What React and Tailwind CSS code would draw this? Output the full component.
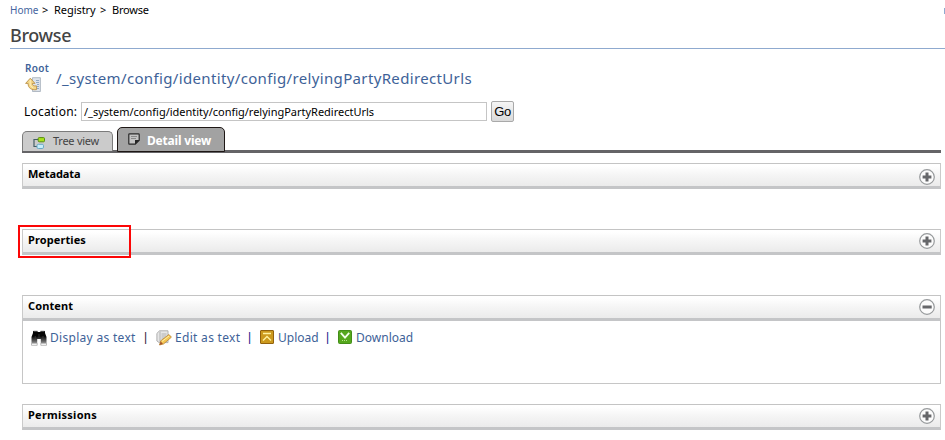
import React from "react";

function Toggle({ open }) {
  return (
    <svg className="h-4 w-4" viewBox="0 0 16 16" fill="none">
      <circle cx="8" cy="8" r="7.3" fill="#fcfcfc" stroke="#979a9c" strokeWidth="1.2" />
      <path d={open ? "M3.5 8h9.2" : "M3.6 8h8.8M8 3.6v8.8"} stroke="#66676a" strokeWidth="3" />
    </svg>
  );
}

function Header({ title, spacing, open, iconOffset = "pt-[3px]" }) {
  return (
    <div className="flex h-[26px] w-[919px] justify-between border-x border-t border-b-[3px] border-x-[#cacaca] border-t-[#c4c4c4] border-b-[#c4c5c7] bg-linear-to-b from-white from-10% via-[#f5f5f5] via-50% to-[#ebebeb] pl-[5px] pr-[5px]">
      <h2 className={"text-[11px] font-bold leading-[20px] text-black " + spacing}>{title}</h2>
      <div className={iconOffset}><Toggle open={open} /></div>
    </div>
  );
}

function ParentIcon() {
  return (
    <svg className="mt-px h-4 w-4" viewBox="0 0 16 16">
      <path d="M7.5.7h7.9v13.8H7.5z" fill="#dce3ec" stroke="#a2acb8" strokeWidth=".8" />
      <path d="M11 3.5h3M11 5.5h3M12 7.5h2M12 9.5h2M11 11.5h3" stroke="#8fa8c4" />
      <path d="M.6 6.4 5.3 1.2 10 6.4H7.4c0 2 1 2.7 4.2 2.5v3.7C6.6 13.4 2.9 11 3.1 6.4z" fill="#f4d687" stroke="#bb924a" strokeWidth=".9" />
      <path d="M5.2 3v4.2q.3 2.6 3 3.6" fill="none" stroke="#fff0bd" />
    </svg>
  );
}

function TreeIcon() {
  return (
    <svg className="h-3 w-3 shrink-0" viewBox="0 0 12 12" fill="none">
      <path d="M5 2.5H1v7h3" stroke="#455f65" strokeWidth="1.2" />
      <rect x="5.2" y=".6" width="6.3" height="4.2" rx="1" fill="#a8e21c" stroke="#568c11" />
      <rect x="4" y="7.3" width="6.5" height="4.2" rx="1.3" fill="#c7eefb" stroke="#69a9c4" />
    </svg>
  );
}

function NoteIcon() {
  return (
    <svg className="h-3 w-3 shrink-0" viewBox="0 0 12 12">
      <path d="M1.5.8h9q.7 0 .7.7v5.7l-4 4H1.5q-.7 0-.7-.7v-9q0-.7.7-.7z" fill="#c3c3c3" stroke="#292929" strokeWidth="1.2" />
      <path d="M7 11.5V7h4.5z" fill="#252525" />
      <path d="M3 3.5h6M3 5.5h5" stroke="#8a8a8a" />
    </svg>
  );
}

function BinocularsIcon() {
  return (
    <svg className="mt-px h-4 w-4 shrink-0" viewBox="0 0 16 16">
      <defs>
        <linearGradient id="barrel" x2="0" y2="1">
          <stop offset=".4" stopColor="#050505" />
          <stop offset="1" stopColor="#999" />
        </linearGradient>
      </defs>
      <path d="M2 1h4.5v1h3V1H14v2l1.5 4v7H9.8V9H6.2v5H.5V7L2 3z" fill="url(#barrel)" />
      <path d="M2.5 1.2h4M9.5 1.2h4" stroke="#777" strokeWidth=".8" />
      <path d="M8 4v4M4.2 6v3M12 6v3" stroke="#444" strokeWidth=".7" />
      <path d="M.5 13.3h5.7v2H.5zM9.8 13.3h5.7v2H9.8z" fill="#fff" stroke="#aaa" strokeWidth=".8" />
    </svg>
  );
}

function EditIcon() {
  return (
    <svg className="mt-px h-4 w-4 shrink-0" viewBox="0 0 16 16">
      <path d="M3.5.8H12v11.8H3.2L.9 11V3.4z" fill="#e7e7e7" stroke="#a9a9a9" strokeWidth=".9" />
      <path d="M4 1.5v10.3M5.5 4h5M5.5 6h5M5.5 8h3" stroke="#aaa" strokeWidth=".9" />
      <path d="m3.5 15 1.3-4.3L13 4.5l2.4 2.7L7.5 14z" fill="#f4c654" stroke="#b98434" strokeWidth=".8" />
      <path d="m3.5 15 1.2-3.4 2.2 2.2z" fill="#a6552d" />
      <path d="m6 11.4 7-5.4" stroke="#fff1a8" />
    </svg>
  );
}

function UploadIcon() {
  return (
    <svg className="mt-px h-[14px] w-[14px] shrink-0" viewBox="0 0 14 14" fill="none">
      <rect x=".5" y=".5" width="13" height="13" rx=".5" fill="#cc991d" stroke="#93620d" />
      <path d="M3 3.5h8M3 10.5l4-4 4 4" stroke="#fff2a0" strokeWidth="1.4" />
    </svg>
  );
}

function DownloadIcon() {
  return (
    <svg className="mt-px h-[14px] w-[14px] shrink-0" viewBox="0 0 14 14" fill="none">
      <rect x=".5" y=".5" width="13" height="13" rx="1" fill="#55a81c" stroke="#438d18" />
      <path d="M2.8 2.8 7 7.6l4.2-4.8" stroke="#f3ffe9" strokeWidth="1.8" />
      <path d="M4 10.5h6" stroke="#b5e38c" strokeDasharray="1 1" />
    </svg>
  );
}

function Separator({ color = "text-[#11118b]" }) {
  return <span className={"w-3 shrink-0 font-['Liberation_Sans',sans-serif] text-[12px] " + color}>|</span>;
}

export default function App() {
  return (
    <div className="relative h-[440px] w-[945px] overflow-hidden bg-white font-['Noto_Sans',sans-serif] text-black">
      <nav className="flex h-5 items-center pl-[10px] text-[11px] leading-5">
        <span className="w-[32px] text-[10px] text-[#4665a0]">Home</span>
        <span className="w-3">&gt;</span>
        <span className="w-[46px] tracking-[-0.05px]">Registry</span>
        <span className="w-[12px]">&gt;</span>
        <span className="tracking-[-0.2px]">Browse</span>
      </nav>
      <h1 className="ml-[10px] h-[29px] border-b border-[#8faacf] text-[18px] font-medium leading-[30px] tracking-[-0.35px] text-[#444]">Browse</h1>
      <div className="flex h-[53px] pl-[25px] pt-[12px] text-[#3e6298]">
        <div className="w-[31px] shrink-0">
          <div className="h-[15px] text-[10px] font-semibold leading-[14px] tracking-[0.3px]">Root</div>
          <ParentIcon />
        </div>
        <div className="text-[15px] leading-[35px] tracking-[0.35px]">/_system/config/identity/config/relyingPartyRedirectUrls</div>
      </div>
      <div className="flex h-[20px] pl-[24px]">
        <label className="w-[57px] text-[12px] leading-[19px] tracking-[0.2px]">Location:</label>
        <input className="h-[19px] w-[406px] border border-[#c5c5c5] bg-white px-[2px] text-[11px] tracking-[-0.01px] outline-none" defaultValue="/_system/config/identity/config/relyingPartyRedirectUrls" />
        <button className="-mt-px ml-1 h-[21px] w-[23px] rounded-[2px] border border-[#a9a9a9] bg-linear-to-b from-[#f5f5f5] to-[#dadada] text-[13px] leading-[19px] tracking-[-0.4px] font-['Liberation_Sans',sans-serif]">Go</button>
      </div>
      <div className="flex h-[31px] pl-[22px]">
        <div className="mt-[9px] flex h-5 w-[91px] rounded-t-[5px] border border-b-0 border-[#7b7b7b] bg-[#cbcbcb] pl-[10px] pt-[5px] text-[11px] text-[#444]">
          <TreeIcon />
          <span className="-mt-[6px] ml-[8px] leading-[19px] tracking-[-0.25px]">Tree view</span>
        </div>
        <div className="relative z-10 ml-1 mt-[5px] flex h-[25px] w-[108px] rounded-t-[5px] border border-[#1e1715] bg-[#a2a2a2] pl-[10px] pt-[5px] text-[12px] font-bold text-white">
          <NoteIcon />
          <span className="-mt-[4px] ml-[7px] leading-[24px] tracking-[-0.2px]">Detail view</span>
        </div>
      </div>
      <div className="-mt-[3px] ml-[22px] mr-1 h-[3px] bg-[#656467]" />
      <main className="ml-[22px] pt-[10px]">
        <Header title="Metadata" spacing="tracking-[-0.1px]" iconOffset="pt-[5px]" />
        <div className="mt-10"><Header title="Properties" spacing="tracking-[0.1px]" /></div>
        <section className="mt-10">
          <Header title="Content" spacing="tracking-[0.1px]" open />
          <div className="flex h-[63px] w-[919px] border-x border-b border-[#c6c6c6] pl-2 pt-[8px] text-[12px] leading-[17px] text-[#3e6298]">
            <div className="flex w-[113px] gap-[3px]"><BinocularsIcon /><span className="tracking-[0.3px]">Display as text</span></div>
            <Separator color="text-[#33203c]" />
            <div className="flex w-[92px] gap-[3px]"><EditIcon /><span className="tracking-[0.3px]">Edit as text</span></div>
            <Separator />
            <div className="flex w-[66px] gap-[4px]"><UploadIcon /><span>Upload</span></div>
            <Separator />
            <div className="flex gap-[4px]"><DownloadIcon /><span>Download</span></div>
          </div>
        </section>
        <div className="mt-5"><Header title="Permissions" spacing="tracking-[0.25px]" /></div>
      </main>
      <div className="absolute left-[18px] top-[225px] h-[33px] w-[113px] border-2 border-[#fc0606]" />
      <div className="absolute left-[944px] top-[8px] h-[6px] w-px bg-[#8faacf]" />
    </div>
  );
}
